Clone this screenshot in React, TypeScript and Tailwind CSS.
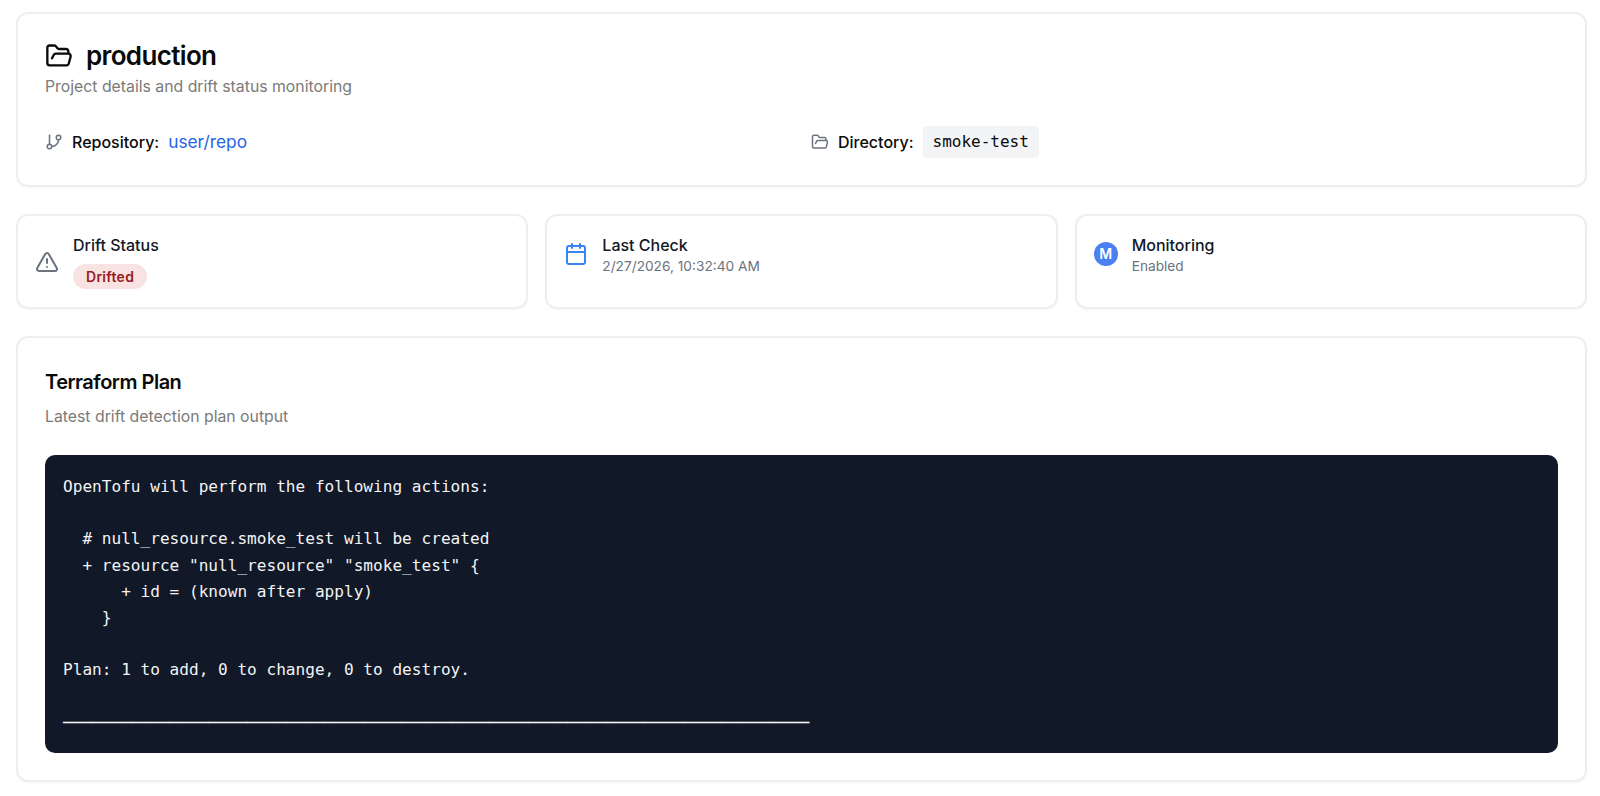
import { AlertTriangle, Calendar, FolderOpen, GitBranch } from "lucide-react";

const plan = `OpenTofu will perform the following actions:

  # null_resource.smoke_test will be created
  + resource "null_resource" "smoke_test" {
      + id = (known after apply)
    }

Plan: 1 to add, 0 to change, 0 to destroy.

${"─".repeat(77)}`;

const mono = "font-['DejaVu_Sans_Mono',monospace]";
const card = "rounded-xl border-2 border-[#eeeeee] shadow-[0_1px_2px_rgba(0,0,0,0.04)]";

export default function App() {
  return (
    <div className="h-[796px] overflow-hidden bg-white pt-3 pr-[13px] pl-4 font-['Inter',sans-serif] text-[#0a0a0a]">
      <div className="flex flex-col gap-[27px]">
        <section className={`${card} px-[27px] pt-[26px] pb-[27px]`}>
          <h1 className="flex items-center gap-[13px] text-[26px] leading-8 font-semibold tracking-tight">
            <FolderOpen className="h-7 w-7" strokeWidth={2} />
            production
          </h1>
          <p className="mt-[3px] text-[15.8px] leading-6 text-[#7a7a7a]">Project details and drift status monitoring</p>
          <div className="mt-[27px] grid grid-cols-2 gap-[19px]">
            <div className="flex h-8 items-center">
              <GitBranch className="h-[18px] w-[18px] text-[#6b7280]" />
              <span className="ml-[9px] text-base font-medium">Repository:</span>
              <a className="ml-[9px] text-[17.3px] text-[#2563eb]">user/repo</a>
            </div>
            <div className="flex h-8 items-center">
              <FolderOpen className="h-[18px] w-[18px] text-[#6b7280]" />
              <span className="ml-[9px] text-base font-medium">Directory:</span>
              <code className={`ml-[9px] rounded bg-[#f3f4f6] px-[10px] py-1 text-base ${mono}`}>smoke-test</code>
            </div>
          </div>
        </section>

        <div className="grid grid-cols-3 gap-[17px]">
          <div className={`${card} flex h-[95px] items-start gap-[14px] px-[17px] pt-[17px]`}>
            <AlertTriangle className="mt-[17px] h-6 w-6 text-[#6b7280]" />
            <div>
              <p className="text-base leading-6 font-medium text-[#111827]">Drift Status</p>
              <span className="mt-[7px] inline-block rounded-full bg-[#f9e2e2] px-[13px] py-[3px] text-sm leading-[19px] font-semibold tracking-[0.02em] text-[#991b1b]">Drifted</span>
            </div>
          </div>
          <div className={`${card} flex h-[95px] items-start gap-[14px] px-[17px] pt-[17px]`}>
            <Calendar className="mt-[9px] h-6 w-6 text-[#3b82f6]" />
            <div>
              <p className="text-base leading-6 font-medium text-[#111827]">Last Check</p>
              <p className="text-[13.7px] leading-[18px] text-[#6b7280]">2/27/2026, 10:32:40 AM</p>
            </div>
          </div>
          <div className={`${card} flex h-[95px] items-start gap-[14px] px-[17px] pt-[17px]`}>
            <div className="mt-[9px] flex h-6 w-6 items-center justify-center rounded-full bg-[#4a80f0] text-sm font-semibold text-white">M</div>
            <div>
              <p className="text-base leading-6 font-medium text-[#111827]">Monitoring</p>
              <p className="text-[13.7px] leading-[18px] text-[#6b7280]">Enabled</p>
            </div>
          </div>
        </div>

        <section className={`${card} px-[27px] pt-[30px] pb-[27px]`}>
          <h2 className="text-xl leading-7 font-semibold tracking-tight">Terraform Plan</h2>
          <p className="mt-[9px] text-[15.8px] leading-6 text-[#7a7a7a]">Latest drift detection plan output</p>
          <pre className={`mt-[26px] rounded-[10px] bg-[#111827] px-[18px] pt-[19px] pb-[17px] text-[16.1px] leading-[26.2px] text-[#f3f4f6] ${mono}`}>{plan}</pre>
        </section>
      </div>
    </div>
  );
}
